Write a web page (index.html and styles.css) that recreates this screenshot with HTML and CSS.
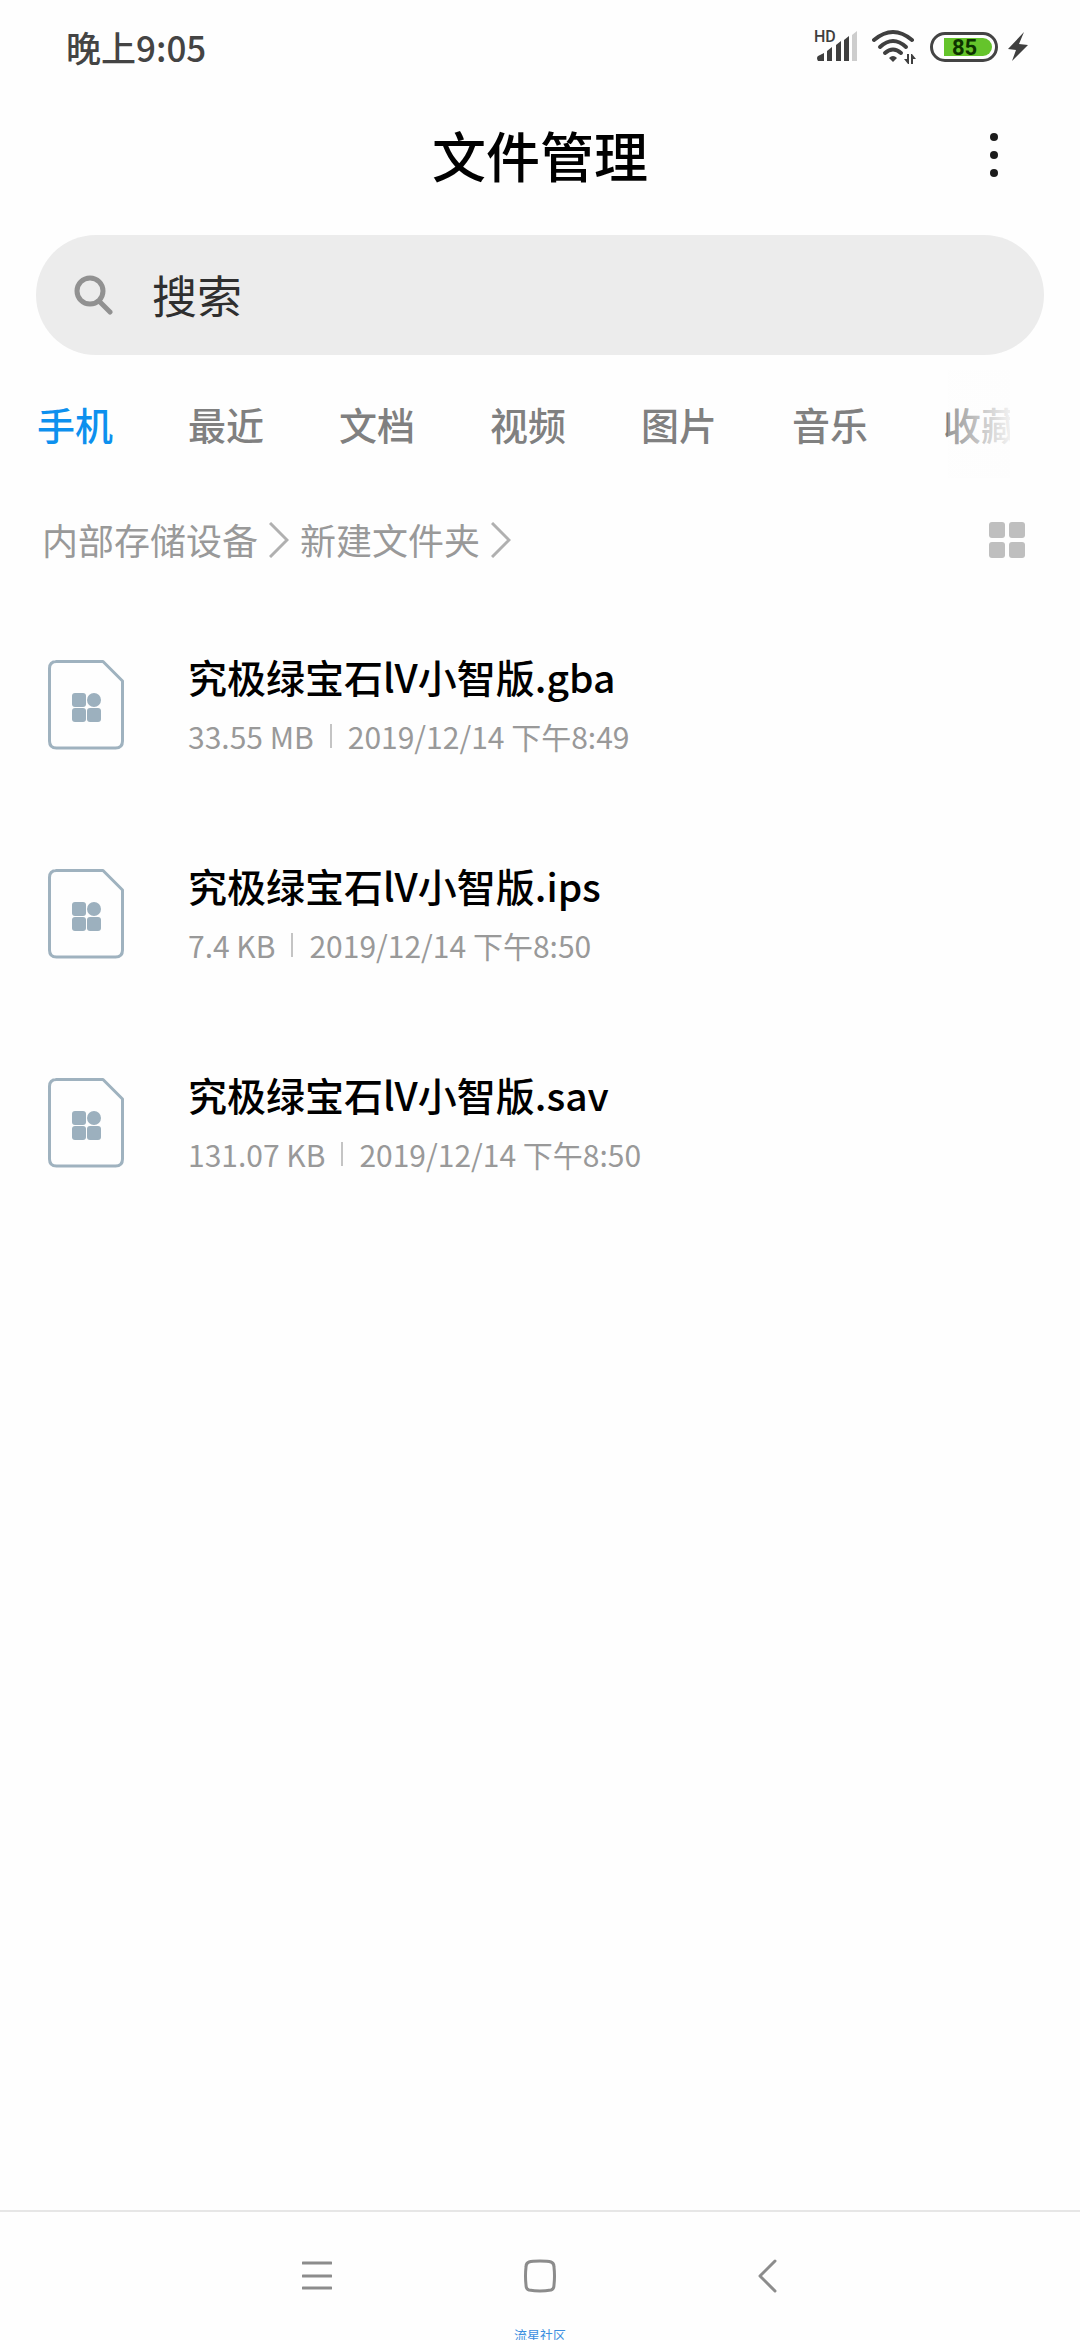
FILE: index.html
```html
<!DOCTYPE html>
<html lang="zh-CN">
<head>
<meta charset="utf-8">
<meta name="viewport" content="width=device-width, initial-scale=1">
<title>文件管理</title>
<link rel="stylesheet" href="styles.css">
</head>
<body>
<div class="status-bar">
  <time class="clock">晚上9:05</time>
  <div class="indicators">
    <div class="signal">
      <span class="hd">HD</span>
      <svg width="42" height="32" viewBox="0 0 42 32" aria-hidden="true">
        <path fill="#3f3f3f" d="M2 30q-2-3 0-5l6-3v8zM11 20l5-4v14h-5zM20 14l5-4v20h-5zM28 9l5-4v25h-5z"/>
        <path fill="#cdcdcd" d="M36 4l5-4v30h-5z"/>
      </svg>
    </div>
    <svg class="wifi" width="44" height="36" viewBox="0 0 44 36" aria-hidden="true">
      <g fill="none" stroke="#3f3f3f" stroke-width="4" stroke-linecap="round">
        <path d="M2 11Q21-5 40 11"/><path d="M8 18q13-12 26 0"/><path d="M13 24q8-7 16 0"/>
      </g>
      <path fill="#3f3f3f" d="M17 29q4-4 8 0l-4 4z"/>
      <path fill="#3f3f3f" d="M35 25h2v10h-1l-4-5h3zM39 25h1l4 5h-3v5h-2z"/>
    </svg>
    <div class="battery"><span class="charge">85</span></div>
    <svg class="bolt" width="20" height="32" viewBox="0 0 20 32" aria-hidden="true"><path fill="#3f3f3f" d="M16 1L0 18l8 1-4 11L20 14l-9-1z"/></svg>
  </div>
</div>

<header class="app-bar">
  <h1>文件管理</h1>
  <button class="more" type="button" aria-label="更多">
    <svg width="10" height="48" viewBox="0 0 10 48" fill="#1c1c1c"><circle cx="5" cy="6" r="4"/><circle cx="5" cy="24" r="4"/><circle cx="5" cy="42" r="4"/></svg>
  </button>
</header>

<label class="search">
  <svg width="40" height="40" viewBox="0 0 40 40" fill="none" stroke="#919191" stroke-width="5" stroke-linecap="round" aria-hidden="true"><circle cx="16" cy="16" r="13"/><path d="M25 26l11 11"/></svg>
  <input type="search" placeholder="搜索" aria-label="搜索">
</label>

<nav class="tabs">
  <a class="active" href="#phone">手机</a>
  <a href="#recent">最近</a>
  <a href="#docs">文档</a>
  <a href="#video">视频</a>
  <a href="#images">图片</a>
  <a href="#music">音乐</a>
  <a href="#favorites">收藏</a>
</nav>

<div class="path-row">
  <nav class="path">
    <a href="#root">内部存储设备</a>
    <svg width="20" height="36" viewBox="0 0 20 36" aria-hidden="true"><path d="M1 1l17 17L1 35"/></svg>
    <a href="#folder">新建文件夹</a>
    <svg width="20" height="36" viewBox="0 0 20 36" aria-hidden="true"><path d="M1 1l17 17L1 35"/></svg>
  </nav>
  <button class="view" type="button" aria-label="网格视图">
    <svg width="36" height="36" viewBox="0 0 36 36" fill="#bfbfbf"><rect width="16" height="16" rx="3"/><rect x="20" width="16" height="16" rx="3"/><rect y="20" width="16" height="16" rx="3"/><rect x="20" y="20" width="16" height="16" rx="3"/></svg>
  </button>
</div>

<svg class="defs" width="0" height="0" aria-hidden="true">
  <symbol id="file" viewBox="0 0 76 90">
    <path fill="none" stroke="#9fb2bf" stroke-width="3" stroke-linejoin="round" d="M8 1.500H55L74.500 21V81q0 7-7 7H8.500q-7 0-7-7V8.500q0-7 7-7z"/>
    <g fill="#9cb0be"><rect x="24" y="33" width="14" height="14" rx="3"/><circle cx="46" cy="40" r="7"/><rect x="24" y="48" width="14" height="14" rx="3"/><rect x="39" y="48" width="14" height="14" rx="3"/></g>
  </symbol>
</svg>

<main>
  <ul class="files">
    <li>
      <svg width="76" height="90" aria-hidden="true"><use href="#file"/></svg>
      <div class="info">
        <h2>究极绿宝石lV小智版.gba</h2>
        <p><span>33.55 MB</span><i></i><span>2019/12/14 下午8:49</span></p>
      </div>
    </li>
    <li>
      <svg width="76" height="90" aria-hidden="true"><use href="#file"/></svg>
      <div class="info">
        <h2>究极绿宝石lV小智版.ips</h2>
        <p><span>7.4 KB</span><i></i><span>2019/12/14 下午8:50</span></p>
      </div>
    </li>
    <li>
      <svg width="76" height="90" aria-hidden="true"><use href="#file"/></svg>
      <div class="info">
        <h2>究极绿宝石lV小智版.sav</h2>
        <p><span>131.07 KB</span><i></i><span>2019/12/14 下午8:50</span></p>
      </div>
    </li>
  </ul>
</main>

<footer class="system-nav">
  <button type="button" aria-label="菜单"><svg width="30" height="32" viewBox="0 0 30 32"><path d="M1 3h28M1 16h28M1 28h28"/></svg></button>
  <button type="button" aria-label="主屏幕"><svg width="34" height="34" viewBox="0 0 34 34"><path d="M17 2q8 0 11 1 3 1 3 5 1 9 0 18 0 4-3 5-11 2-22 0-3-1-3-5-1-9 0-18 0-4 3-5 3-1 11-1z"/></svg></button>
  <button type="button" aria-label="返回"><svg width="28" height="34" viewBox="0 0 28 34"><path d="M26 2L11 17l15 15"/></svg></button>
  <span class="watermark">流星社区</span>
</footer>
</body>
</html>
```
FILE: styles.css
```css
* {
  box-sizing: border-box;
}

body {
  margin: 0;
  min-height: 100vh;
  display: flex;
  flex-direction: column;
  background: #fefefe;
  color: #000;
  font-family: "Noto Sans CJK SC", sans-serif;
}

h1, h2, p, ul {
  margin: 0;
  padding: 0;
  font-weight: 500;
}

a {
  color: inherit;
  text-decoration: none;
}

button {
  display: flex;
  align-items: center;
  justify-content: center;
  padding: 0;
  border: 0;
  background: none;
}

svg {
  flex: none;
  display: block;
}

.defs {
  position: absolute;
}

/* Status bar */
.status-bar {
  display: flex;
  align-items: center;
  justify-content: space-between;
  height: 94px;
  padding: 0 52px 0 66px;
}

.clock {
  color: #444;
  font-size: 35px;
  font-weight: 500;
  line-height: 48px;
}

.indicators {
  display: flex;
  align-items: center;
}

.signal {
  position: relative;
  margin-right: 14px;
}

.hd {
  position: absolute;
  left: -2px;
  top: -2px;
  color: #3f3f3f;
  font: 500 16px/16px Roboto, sans-serif;
}

.wifi {
  margin-right: 14px;
}

.battery {
  width: 68px;
  height: 30px;
  margin-right: 10px;
  padding: 3px 3px 3px 11px;
  border: 3px solid #444;
  border-radius: 15px;
}

.charge {
  display: block;
  height: 18px;
  border-radius: 0 9px 9px 0;
  background: #65c42b;
  color: #0d3300;
  font: 700 22px/20px Roboto, sans-serif;
  padding-left: 8px;
}

/* Title */
.app-bar {
  display: grid;
  grid-template-columns: 1fr auto 1fr;
  align-items: center;
  height: 122px;
  padding: 0 64px;
}

.app-bar h1 {
  grid-column: 2;
  font-size: 54px;
  line-height: 80px;
}

.more {
  justify-self: end;
  width: 44px;
  height: 60px;
}

/* Search */
.search {
  display: flex;
  align-items: center;
  gap: 38px;
  height: 120px;
  margin: 19px 36px 0;
  padding: 0 38px;
  border-radius: 60px;
  background: #ececec;
}

.search input {
  flex: 1;
  min-width: 0;
  height: 72px;
  padding: 0;
  border: 0;
  outline: 0;
  background: none;
  font: 400 45px/72px "Noto Sans CJK SC", sans-serif;
}

.search input::placeholder {
  color: #2f2f2f;
}

/* Category tabs */
.tabs {
  position: relative;
  display: flex;
  align-items: center;
  gap: 75px;
  height: 108px;
  margin: 15px 70px 0 37px;
  overflow: hidden;
  color: #808080;
  font-size: 38px;
  font-weight: 500;
  line-height: 56px;
  white-space: nowrap;
}

.tabs a {
  flex: none;
}

.tabs .active {
  color: #0d90ee;
}

.tabs::after {
  content: "";
  position: absolute;
  top: 0;
  right: 0;
  width: 62px;
  height: 100%;
  background: linear-gradient(to right, rgba(251, 251, 251, 0.2), rgba(253, 253, 253, 0.9));
}

/* Path */
.path-row {
  display: flex;
  align-items: center;
  justify-content: space-between;
  height: 60px;
  margin-top: 32px;
  padding: 0 55px 0 42px;
}

.path {
  display: flex;
  align-items: center;
  gap: 11px;
  color: #999;
  font-size: 36px;
  line-height: 52px;
}

.path a {
  padding-bottom: 2px;
}

.path svg {
  fill: none;
  stroke: #b0b0b0;
  stroke-width: 3;
}

/* Files */
main {
  flex: 1;
  padding-top: 30px;
}

.files {
  list-style: none;
}

.files li {
  display: flex;
  align-items: center;
  gap: 64px;
  height: 209px;
  padding: 0 48px;
}

.info {
  padding-top: 2px;
}

.info h2 {
  font-size: 39px;
  line-height: 60px;
}

.info p {
  display: flex;
  align-items: center;
  color: #999;
  font-size: 30px;
  font-weight: 400;
  line-height: 60px;
}

.info i {
  width: 2px;
  height: 24px;
  margin: 0 16px;
  background: #c4c4c4;
}

/* System navigation */
.system-nav {
  position: relative;
  display: grid;
  grid-template-columns: repeat(3, 1fr);
  height: 130px;
  padding: 0 19%;
  border-top: 2px solid #e6e6e6;
}

.system-nav svg {
  fill: none;
  stroke: #8c8c8c;
  stroke-width: 3;
  stroke-linecap: round;
  stroke-linejoin: round;
}

.watermark {
  position: absolute;
  right: 0;
  bottom: -4px;
  left: 0;
  height: 18px;
  overflow: hidden;
  color: #3d8fe0;
  font-size: 13px;
  line-height: 18px;
  text-align: center;
}
```
